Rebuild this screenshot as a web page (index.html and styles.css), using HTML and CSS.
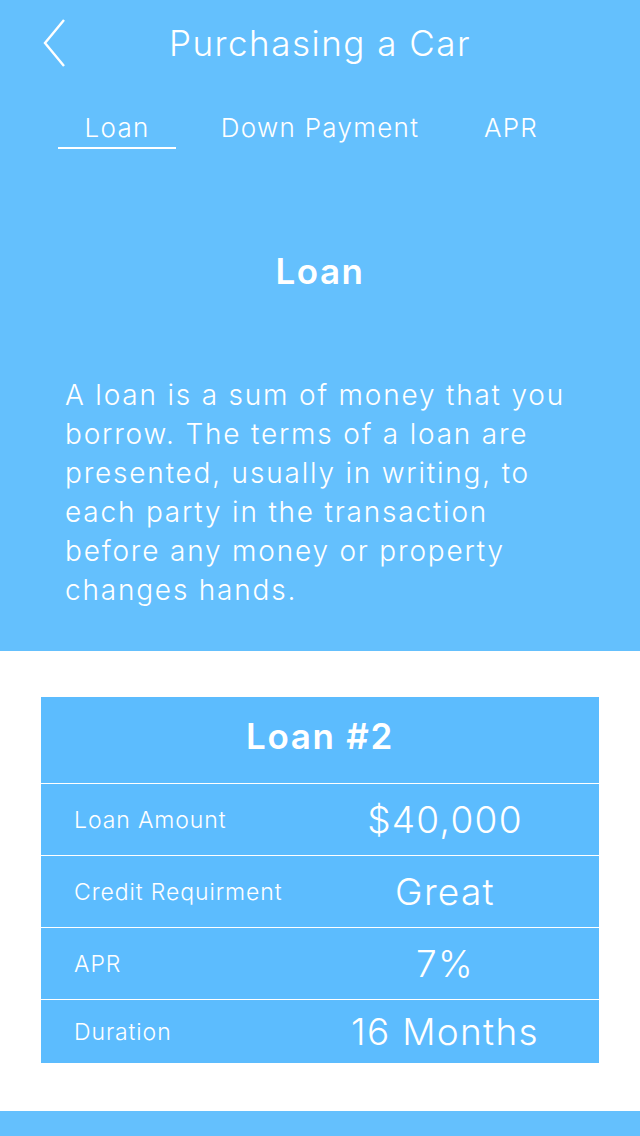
FILE: index.html
```html
<!DOCTYPE html>
<html>
<head>
<meta charset="utf-8">
<link rel="stylesheet" href="styles.css">
</head>
<body>
<div class="hero">
  <div class="topbar">
    <div class="back">
      <svg width="24" height="50" viewBox="0 0 24 50"><polyline points="21,2 2,25 21,48" fill="none" stroke="#fff" stroke-width="2.4"/></svg>
    </div>
    <div class="title">Purchasing a Car</div>
    <div></div>
  </div>
  <div class="tabs">
    <div class="tab active">Loan</div>
    <div class="tab">Down Payment</div>
    <div class="tab">APR</div>
  </div>
  <h1 class="heading">Loan</h1>
  <p class="desc">A loan is a sum of money that you borrow. The terms of a loan are presented, usually in writing, to each party in the transaction before any money or property changes hands.</p>
</div>
<div class="content">
  <div class="card">
    <div class="card-head">Loan #2</div>
    <div class="row"><div class="label">Loan Amount</div><div class="value">$40,000</div></div>
    <div class="row"><div class="label">Credit Requirment</div><div class="value">Great</div></div>
    <div class="row"><div class="label">APR</div><div class="value">7%</div></div>
    <div class="row last"><div class="label">Duration</div><div class="value">16 Months</div></div>
  </div>
</div>
<div class="footer-bar"></div>
</body>
</html>
```
FILE: styles.css
```css
* { box-sizing: border-box; }
html, body { margin: 0; padding: 0; }
body {
  width: 640px;
  height: 1136px;
  overflow: hidden;
  background: #fff;
  font-family: Inter, Lato, "Liberation Sans", sans-serif;
  color: #fff;
}
.hero {
  background: #64c0fd;
  height: 651px;
}
.topbar {
  height: 86px;
  display: grid;
  grid-template-columns: 1fr auto 1fr;
  align-items: center;
}
.back {
  padding-left: 43px;
  display: flex;
  align-items: center;
}
.back svg { display: block; }
.title {
  font-size: 35px;
  font-weight: 300;
  letter-spacing: 1.5px;
}
.tabs {
  display: grid;
  grid-template-columns: 118px 288px 94px;
  padding-left: 58px;
  margin-top: 26px;
}
.tab {
  text-align: center;
  font-size: 26px;
  font-weight: 300;
  letter-spacing: 1.3px;
  height: 37px;
  line-height: 32px;
}
.tab.active { border-bottom: 2px solid #fff; }
.heading {
  margin: 102px 0 0;
  text-align: center;
  font-size: 35px;
  font-weight: 600;
  line-height: 40px;
  letter-spacing: 1.5px;
}
.desc {
  margin: 85px 0 0;
  padding: 0 60px 0 65px;
  font-size: 28px;
  font-weight: 300;
  line-height: 39px;
  letter-spacing: 1.8px;
}
.content {
  padding: 46px 41px 0;
  height: 460px;
}
.card {
  background: #5cbcfe;
}
.card-head {
  height: 87px;
  padding-bottom: 9px;
  display: flex;
  align-items: center;
  justify-content: center;
  font-size: 35px;
  font-weight: 600;
  letter-spacing: 1.7px;
  border-bottom: 1px solid #fff;
}
.row {
  display: grid;
  grid-template-columns: 250px 1fr;
  align-items: center;
  height: 72px;
  border-bottom: 1px solid #fff;
}
.row.last { border-bottom: none; height: 63px; }
.label {
  padding-left: 33px;
  font-size: 23px;
  font-weight: 300;
  letter-spacing: 0.9px;
}
.value {
  text-align: center;
  font-size: 37px;
  font-weight: 300;
  letter-spacing: 1.3px;
}
.footer-bar {
  height: 25px;
  background: #64c0fd;
}
```
